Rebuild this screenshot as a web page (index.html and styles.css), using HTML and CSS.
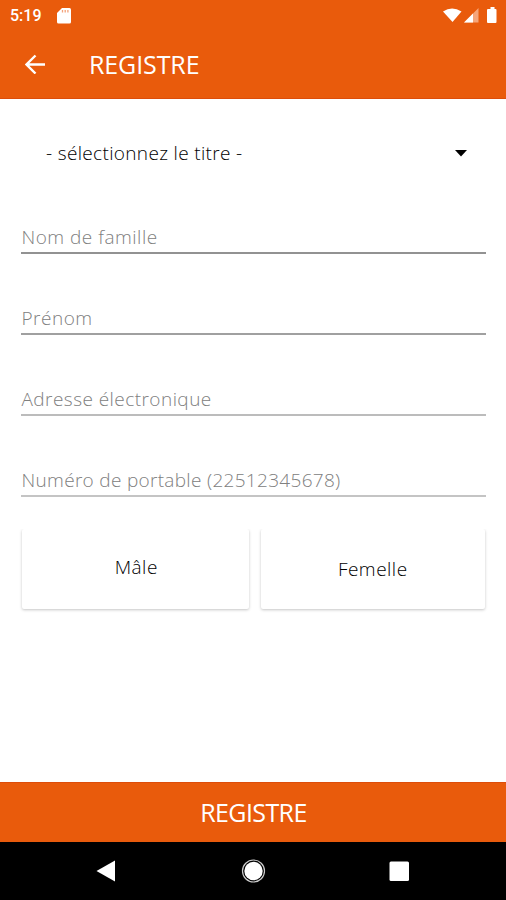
FILE: index.html
```html
<!DOCTYPE html>
<html lang="fr">
<head>
<meta charset="utf-8">
<title>Registre</title>
<link rel="stylesheet" href="styles.css">
</head>
<body>
<header class="top">
  <div class="status">
    <span class="time">5:19</span>
    <svg class="sd" width="14" height="16" viewBox="0 0 14 16"><path fill="#fff" d="M5 0h7.500Q14 0 14 1.500V14Q14 15.500 12.500 15.500h-11Q0 15.500 0 14V5z"/><path stroke="#f3a27a" stroke-width="1.300" d="M5.500 2v2.500M8.200 2v2.500M10.900 2v2.500"/></svg>
    <svg class="signals" width="56" height="18" viewBox="0 0 56 18"><path fill="#fff" d="M1 4.500Q10-1.500 19.500 4.500L10.500 15z"/><path fill="#f5a57a" d="M36.500 1v14.500H22z"/><path fill="#fff" d="M31 6.500v9h-9z"/><path fill="#fff" d="M48.500 0h4v2h1q1 0 1 1v12q0 1-1 1h-7.500q-1 0-1-1V3q0-1 1-1h2.500z"/></svg>
  </div>
  <div class="bar">
    <svg class="back" width="20" height="20" viewBox="0 0 20 20"><path fill="none" stroke="#fff" stroke-width="2.400" d="M20 10.500H2M10.500 1.500L1.500 10.500l9 9"/></svg>
    <h1 class="title">REGISTRE</h1>
  </div>
</header>
<main class="form">
  <div class="select"><span>- sélectionnez le titre -</span><svg width="12" height="7" viewBox="0 0 12 7"><path d="M0 0h12L6 6.500z"/></svg></div>
  <div class="field"><span>Nom de famille</span></div>
  <div class="field"><span>Prénom</span></div>
  <div class="field soft"><span>Adresse électronique</span></div>
  <div class="field soft phone"><span>Numéro de portable (22512345678)</span></div>
  <div class="genders">
    <div class="card male"><span>Mâle</span></div>
    <div class="card female"><span>Femelle</span></div>
  </div>
</main>
<div class="submit"><span>REGISTRE</span></div>
<nav class="nav">
  <svg width="506" height="58" viewBox="0 0 506 58"><path fill="#fff" d="M96.500 29L115 18.500v21z"/><circle cx="253.500" cy="29" r="11" fill="none" stroke="#ccc" stroke-width="1.200"/><circle cx="253.500" cy="29" r="9.200" fill="#fff"/><rect x="389.500" y="19.500" width="19.500" height="19.500" rx="1.500" fill="#fff"/></svg>
</nav>
</body>
</html>
```
FILE: styles.css
```css
* { box-sizing: border-box; }
body { margin: 0; width: 506px; height: 900px; display: flex; flex-direction: column; background: #fff; font-family: "Open Sans", sans-serif; overflow: hidden; }
svg { display: block; flex: none; }
.top { height: 99px; background: #e95b0c; color: #fff; border-bottom: 1px solid #dd4d0b; }
.status { height: 31px; display: flex; align-items: center; padding: 0 8px 0 10px; }
.time { width: 47px; font: 500 16px/20px Roboto, sans-serif; }
.signals { margin-left: auto; }
.bar { height: 66px; display: flex; align-items: center; padding-left: 25px; }
.title { margin: 0 0 0 44px; font-size: 25px; font-weight: 400; line-height: 34px; letter-spacing: -.1px; }
.form { flex: 1; padding: 0 20px 0 21px; }
.select { height: 74px; margin-top: 17px; padding: 0 19px 0 25px; display: flex; align-items: center; justify-content: space-between; font-size: 19px; font-weight: 300; letter-spacing: .34px; color: #000; }
.field { height: 81px; display: flex; align-items: flex-end; border-bottom: 2px solid #a0a0a0; padding: 0 0 2px .5px; font-size: 19px; font-weight: 300; line-height: 26px; letter-spacing: .5px; color: #808080; }
.select + .field { height: 64px; border-color: #929292; }
.soft { border-color: #bcbcbc; letter-spacing: .45px; }
.phone { border-color: #c4c4c4; letter-spacing: .31px; }
.genders { display: flex; gap: 12px; margin: 32px 1px 0 1px; }
.card { flex: 1; height: 80px; display: flex; align-items: center; justify-content: center; border-radius: 2px; box-shadow: 0 1px 3px rgba(0,0,0,.23); clip-path: inset(0 -4px -5px -4px); font-size: 19px; font-weight: 300; letter-spacing: .5px; }
.male { padding: 0 0 4px 2px; }
.female { padding-right: 0; }
.submit { height: 60px; background: #e95b0c; border-top: 1px solid #dd4d0b; color: #fff; display: flex; align-items: center; justify-content: center; padding: 0 0 1px 1px; font-size: 25px; letter-spacing: -.6px; }
.nav { height: 58px; background: #000; }
```
